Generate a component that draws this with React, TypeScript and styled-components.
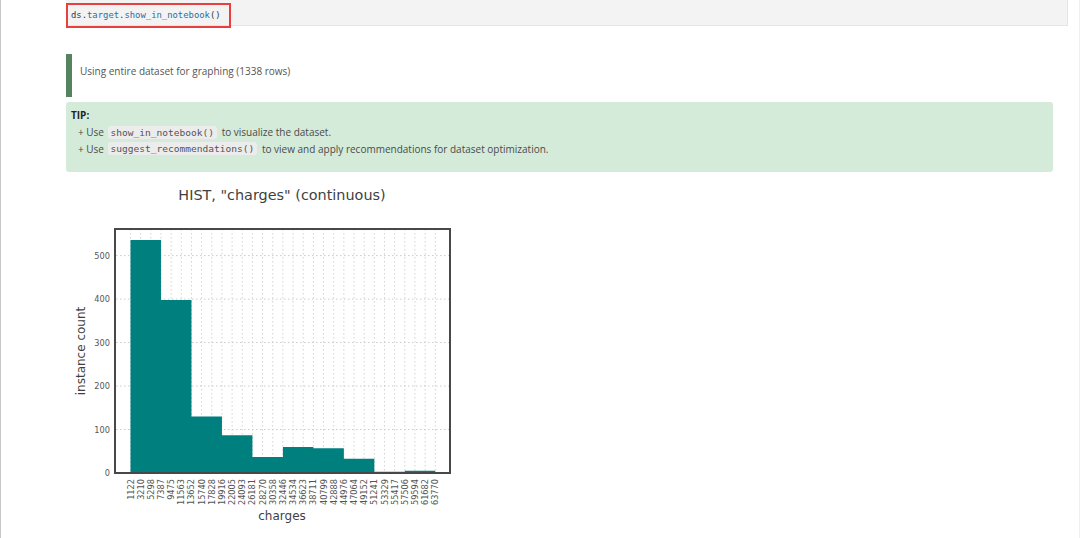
import React from "react";
import styled, { createGlobalStyle } from "styled-components";

const GlobalStyle = createGlobalStyle`
  html, body {
    margin: 0;
    padding: 0;
    background: #fff;
  }
  body {
    font-family: "Open Sans", "Liberation Sans", sans-serif;
    overflow: hidden;
  }
`;

const Page = styled.div`
  box-sizing: border-box;
  width: 1080px;
  height: 538px;
  overflow: hidden;
  border-left: 1px solid #c8c8c8;
  border-right: 1px solid #eeeeee;
  padding-left: 65px;
  display: flex;
  flex-direction: column;
`;
const CodeCell = styled.div`
  box-sizing: border-box;
  width: 1002px;
  height: 26px;
  background: #f3f3f3;
  border-right: 1px solid #e4e4e4;
  border-bottom: 1px solid #e6e6e6;
  display: flex;
  align-items: flex-start;
  padding-top: 3px;
`;
const CodeHighlight = styled.div`
  box-sizing: border-box;
  width: 165px;
  height: 25px;
  flex: none;
  border: 2px solid #e8403f;
  padding-left: 3px;
  padding-bottom: 1px;
  display: flex;
  align-items: center;
  font-family: "DejaVu Sans Mono", "Liberation Mono", monospace;
  font-size: 8.9px;
  color: #3a3a3a;
  white-space: pre;
`;
const Attr = styled.span`
  color: #2a6fa8;
`;
const Output = styled.div`
  box-sizing: border-box;
  width: 987px;
  height: 43px;
  margin-top: 28px;
  border-left: 6px solid #55835f;
  padding-left: 8px;
  padding-bottom: 9px;
  display: flex;
  align-items: center;
  font-size: 10px;
  color: #555;
`;
const Tip = styled.div`
  box-sizing: border-box;
  width: 987px;
  height: 70px;
  margin-top: 5px;
  padding: 6px 5px;
  background: #d5ebda;
  border-radius: 3px;
  font-size: 10px;
  color: #4a4a4a;
`;
const TipTitle = styled.div`
  font-weight: 700;
  color: #222;
  line-height: 14px;
  margin-bottom: 2px;
`;
const TipLine = styled.div`
  display: flex;
  align-items: center;
  gap: 1px;
  height: 16.5px;
  padding-left: 7px;
  white-space: pre;
`;
const InlineCode = styled.code`
  font-family: "DejaVu Sans Mono", "Liberation Mono", monospace;
  font-size: 9.55px;
  color: #555;
  background: #ececec;
  border-radius: 3px;
  padding: 1px 3px;
  margin-right: 1px;
`;
const Chart = styled.svg`
  display: block;
  width: 400px;
  height: 358px;
  margin-top: 8px;
  flex: none;
`;

const ticks = [
  1122, 3210, 5298, 7387, 9475, 11563, 13652, 15740, 17828, 19916, 22005, 24093,
  26181, 28270, 30358, 32446, 34534, 36623, 38711, 40799, 42888, 44976, 47064,
  49152, 51241, 53329, 55417, 57506, 59594, 61682, 63770,
];
const counts = [536, 398, 130, 87, 37, 60, 57, 33, 3, 5];

// chart coordinates: the svg starts at x=66, y=180 of the page
const ox = 66;
const oy = 180;
const tickX = (i: number) => 130.5 + i * 10.16 - ox;
const valueY = (v: number) => 473 - v * 0.4348 - oy;

// one outline for all bars, so no seams show between them
const barsPath =
  `M${tickX(0)} ${valueY(0)} ` +
  counts.map((c, i) => `L${tickX(i * 3)} ${valueY(c)} L${tickX((i + 1) * 3)} ${valueY(c)}`).join(" ") +
  ` L${tickX(30)} ${valueY(0)} Z`;

const Histogram: React.FC = () => {
  return (
    <Chart viewBox="0 0 400 358">
      <text x="216" y="19.5" textAnchor="middle" fontFamily="DejaVu Sans" fontSize="14.4" fill="#3f3f3f">
        HIST, "charges" (continuous)
      </text>
      {ticks.map((t, i) => (
        <line key={t} x1={tickX(i)} x2={tickX(i)} y1="49" y2="293" stroke="#d2d2d2" strokeWidth="1" strokeDasharray="1.5 2.5" />
      ))}
      {[100, 200, 300, 400, 500].map((v) => (
        <line key={v} x1="50" x2="383" y1={valueY(v)} y2={valueY(v)} stroke="#cccccc" strokeWidth="1" strokeDasharray="1.5 2.5" />
      ))}
      <path d={barsPath} fill="#007f7f" />
      <rect x="49" y="49" width="335" height="244" fill="none" stroke="#484848" strokeWidth="2" />
      {[0, 100, 200, 300, 400, 500].map((v) => (
        <text key={v} x="44" y={valueY(v) + 3} textAnchor="end" fontFamily="DejaVu Sans" fontSize="8.2" fill="#555">
          {v}
        </text>
      ))}
      {ticks.map((t, i) => (
        <text
          key={t}
          transform={`translate(${tickX(i) + 3} 299) rotate(-90)`}
          textAnchor="end"
          fontFamily="DejaVu Sans"
          fontSize="8.2"
          fill="#555"
        >
          {t}
        </text>
      ))}
      <text
        transform="translate(19 171) rotate(-90)"
        textAnchor="middle"
        fontFamily="DejaVu Sans"
        fontSize="12"
        fill="#3f3f3f"
      >
        instance count
      </text>
      <text x="216" y="340" textAnchor="middle" fontFamily="DejaVu Sans" fontSize="12" fill="#3f3f3f">
        charges
      </text>
    </Chart>
  );
};

const App: React.FC = () => {
  return (
    <>
      <GlobalStyle />
      <Page>
        <CodeCell>
          <CodeHighlight>
            ds.<Attr>target</Attr>.<Attr>show_in_notebook</Attr>()
          </CodeHighlight>
        </CodeCell>
        <Output>Using entire dataset for graphing (1338 rows)</Output>
        <Tip>
          <TipTitle>TIP:</TipTitle>
          <TipLine>
            + Use <InlineCode>show_in_notebook()</InlineCode> to visualize the dataset.
          </TipLine>
          <TipLine>
            + Use <InlineCode>suggest_recommendations()</InlineCode> to view and apply recommendations for dataset optimization.
          </TipLine>
        </Tip>
        <Histogram />
      </Page>
    </>
  );
};

export default App;
